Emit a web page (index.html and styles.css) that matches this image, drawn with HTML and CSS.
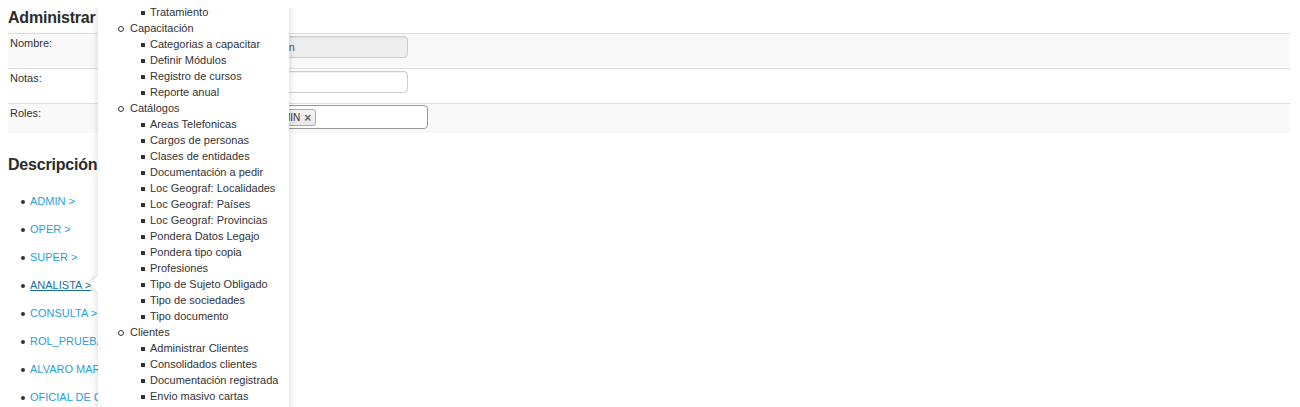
FILE: index.html
```html
<!DOCTYPE html>
<html lang="es">
<head>
<meta charset="utf-8">
<title>Administrar Rol</title>
<link rel="stylesheet" href="styles.css">
</head>
<body>
<div class="page">
  <h2 class="title">Administrar Rol</h2>
  <table class="form-table">
    <tr class="striped">
      <td class="label">Nombre:</td>
      <td class="field"><input class="text-input disabled" type="text" value="admin" disabled></td>
    </tr>
    <tr>
      <td class="label">Notas:</td>
      <td class="field"><input class="text-input" type="text" value=""></td>
    </tr>
    <tr class="striped">
      <td class="label">Roles:</td>
      <td class="field field-last">
        <div class="multi-select">
          <span class="tag">ADMIN <span class="tag-x">×</span></span>
        </div>
      </td>
    </tr>
  </table>

  <h2 class="title title-desc">Descripción de roles</h2>
  <ul class="role-list">
    <li><a href="#">ADMIN &gt;</a></li>
    <li><a href="#">OPER &gt;</a></li>
    <li><a href="#">SUPER &gt;</a></li>
    <li><a href="#" class="active">ANALISTA &gt;</a></li>
    <li><a href="#">CONSULTA &gt;</a></li>
    <li><a href="#">ROL_PRUEBA &gt;</a></li>
    <li><a href="#">ALVARO MARTINEZ &gt;</a></li>
    <li><a href="#">OFICIAL DE CUMPLIMIENTO &gt;</a></li>
  </ul>

  <div class="popover">
    <div class="arrow"></div>
    <ul class="menu-l1">
      <li class="no-marker">
        <ul class="menu-l2">
          <li>Tratamiento</li>
        </ul>
      </li>
      <li>Capacitación
        <ul class="menu-l2">
          <li>Categorias a capacitar</li>
          <li>Definir Módulos</li>
          <li>Registro de cursos</li>
          <li>Reporte anual</li>
        </ul>
      </li>
      <li>Catálogos
        <ul class="menu-l2">
          <li>Areas Telefonicas</li>
          <li>Cargos de personas</li>
          <li>Clases de entidades</li>
          <li>Documentación a pedir</li>
          <li>Loc Geograf: Localidades</li>
          <li>Loc Geograf: Países</li>
          <li>Loc Geograf: Provincias</li>
          <li>Pondera Datos Legajo</li>
          <li>Pondera tipo copia</li>
          <li>Profesiones</li>
          <li>Tipo de Sujeto Obligado</li>
          <li>Tipo de sociedades</li>
          <li>Tipo documento</li>
        </ul>
      </li>
      <li>Clientes
        <ul class="menu-l2">
          <li>Administrar Clientes</li>
          <li>Consolidados clientes</li>
          <li>Documentación registrada</li>
          <li>Envio masivo cartas</li>
        </ul>
      </li>
    </ul>
  </div>
</div>
</body>
</html>
```
FILE: styles.css
```css
html, body {
  margin: 0;
  padding: 0;
  background: #fff;
  overflow: hidden;
}
body {
  margin: 8px;
  font-family: "Liberation Sans", Arial, sans-serif;
  font-size: 11px;
  color: #333;
}
.page {
  position: relative;
}
.title {
  margin: 0 0 5px 0;
  font-size: 16px;
  line-height: 20px;
  font-weight: bold;
  color: #2b2b2b;
  white-space: nowrap;
  letter-spacing: -0.2px;
}
.title-desc {
  margin-top: 22px;
  margin-bottom: 12px;
}
.form-table {
  width: calc(100% - 2px);
  border-collapse: collapse;
  border-spacing: 0;
}
.form-table td {
  border-top: 1px solid #ddd;
  padding: 2px 2px 0 2px;
  vertical-align: top;
  line-height: 15px;
}
.form-table tr.striped td {
  background: #f9f9f9;
}
.form-table td.label {
  width: 244px;
  color: #333;
}
.form-table td.field-last {
  padding-top: 1px;
}
.text-input {
  display: block;
  box-sizing: border-box;
  width: 150px;
  height: 22px;
  margin: 0 0 10px 0;
  padding: 2px 6px;
  border: 1px solid #ccc;
  border-radius: 4px;
  background: #fff;
  font-family: "Liberation Sans", Arial, sans-serif;
  font-size: 11px;
  color: #555;
  box-shadow: inset 0 1px 1px rgba(0,0,0,0.06);
}
.text-input.disabled {
  background: #eee;
  color: #555;
}
.multi-select {
  box-sizing: border-box;
  width: 170px;
  height: 24px;
  margin-bottom: 4px;
  border: 1px solid #999;
  border-radius: 4px;
  background: #fff;
  padding: 3px 0 0 3px;
  display: flex;
  align-items: flex-start;
}
.tag {
  display: inline-flex;
  align-items: center;
  gap: 4px;
  height: 15px;
  padding: 0 4px 0 5px;
  border: 1px solid #aaa;
  border-radius: 3px;
  background: linear-gradient(#f4f4f4, #e8e8e8);
  color: #333;
  font-size: 10px;
  line-height: 15px;
}
.tag-x {
  font-size: 12px;
  font-weight: bold;
  color: #666;
  line-height: 14px;
}
.role-list {
  margin: 0;
  padding: 0 0 0 22px;
  list-style: none;
}
.role-list li {
  position: relative;
  line-height: 28px;
  font-size: 11px;
  color: #333;
}
.role-list li::before {
  content: "";
  position: absolute;
  left: -9px;
  top: 13px;
  width: 4px;
  height: 4px;
  border-radius: 50%;
  background: #333;
}
.role-list a {
  color: #2a9fd6;
  text-decoration: none;
  white-space: nowrap;
}
.role-list a.active {
  color: #1d6fa1;
  text-decoration: underline;
}
.popover {
  position: absolute;
  left: 90px;
  top: -18px;
  width: 191px;
  height: 440px;
  background: #fff;
  box-shadow: 0 0 8px rgba(0,0,0,0.16);
  z-index: 10;
}
.arrow {
  position: absolute;
  left: -6px;
  top: 288px;
  width: 12px;
  height: 12px;
  background: #fff;
  transform: rotate(45deg);
  box-shadow: -2px 2px 4px rgba(0,0,0,0.1);
}
.popover::after {
  content: "";
  position: absolute;
  left: 0;
  top: 280px;
  width: 10px;
  height: 28px;
  background: #fff;
}
.menu-l1 {
  position: relative;
  z-index: 2;
  margin: 0;
  padding: 14px 0 0 32px;
  list-style: none;
}
.menu-l1 > li {
  position: relative;
  line-height: 16px;
  font-size: 11px;
  color: #333;
  white-space: nowrap;
}
.menu-l1 > li::before {
  content: "";
  position: absolute;
  left: -12px;
  top: 6px;
  width: 4px;
  height: 4px;
  border: 1px solid #333;
  border-radius: 50%;
}
.menu-l1 > li.no-marker::before {
  display: none;
}
.menu-l2 {
  margin: 0;
  padding: 0 0 0 20px;
  list-style: none;
}
.menu-l2 > li {
  position: relative;
  line-height: 16px;
}
.menu-l2 > li::before {
  content: "";
  position: absolute;
  left: -9px;
  top: 7px;
  width: 4px;
  height: 4px;
  background: #333;
}
```
